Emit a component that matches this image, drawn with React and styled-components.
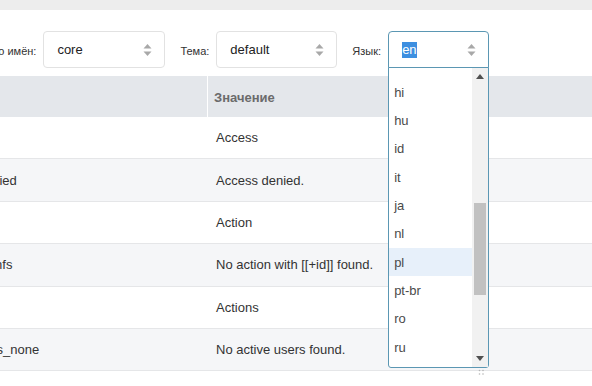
import React, { useLayoutEffect, useRef } from 'react';
import styled, { createGlobalStyle } from 'styled-components';

const GlobalStyle = createGlobalStyle`
    body {
        margin: 0;
        overflow: hidden;
        background: #fff;
        font-family: "Liberation Sans", Arial, sans-serif;
    }
`

const ITEM_H = 28.33;

const languages = [
    'ar', 'bg', 'cs', 'da', 'de', 'el', 'en', 'es', 'fa', 'fi', 'fr', 'he',
    'hi', 'hu', 'id', 'it', 'ja', 'nl', 'pl', 'pt-br', 'ro', 'ru',
    'sv', 'th', 'tr', 'uk', 'zh'
];

const rows = [
    ['access', 'Access'],
    ['access_denied', 'Access denied.'],
    ['action', 'Action'],
    ['action_err_nfs', 'No action with [[+id]] found.'],
    ['actions', 'Actions'],
    ['active_users_none', 'No active users found.'],
    ['add', 'Add'],
];

function Arrows() {
    return (
        <ArrowIcon width="9" height="14" viewBox="0 0 9 14">
            <path d="M4.5 1 L8.5 5.5 L0.5 5.5 Z" fill="#a8a8a8" />
            <path d="M4.5 13 L8.5 8.5 L0.5 8.5 Z" fill="#a8a8a8" />
        </ArrowIcon>
    )
}

function LanguageList() {
    const listRef = useRef(null);
    useLayoutEffect(() => {
        if (listRef.current) listRef.current.scrollTop = 12 * ITEM_H - 9.5;
    }, []);
    return (
        <Dropdown>
            <Items ref={listRef}>
                {languages.map((l) => (
                    <Item key={l} active={l === 'pl'}>{l}</Item>
                ))}
            </Items>
            <Scrollbar>
                <ScrollArrow>
                    <svg width="8" height="5" viewBox="0 0 8 5"><path d="M4 0 L8 5 L0 5 Z" fill="#505050" /></svg>
                </ScrollArrow>
                <Track>
                    <Thumb />
                </Track>
                <ScrollArrow>
                    <svg width="8" height="5" viewBox="0 0 8 5"><path d="M0 0 L8 0 L4 5 Z" fill="#505050" /></svg>
                </ScrollArrow>
            </Scrollbar>
            <Grip>
                <svg width="7" height="7" viewBox="0 0 7 7">
                    <circle cx="1.5" cy="1.5" r="0.8" fill="#b5b5b5" />
                    <circle cx="5" cy="1.5" r="0.8" fill="#b5b5b5" />
                    <circle cx="1.5" cy="5" r="0.8" fill="#b5b5b5" />
                    <circle cx="5" cy="5" r="0.8" fill="#b5b5b5" />
                </svg>
            </Grip>
        </Dropdown>
    )
}

export default function App() {
    return (
        <>
            <GlobalStyle />
            <TopBar />
            <Page>
                <Toolbar>
                    <Field>
                        <Label>Пространство имён:</Label>
                        <Select width={122}>
                            <span>core</span>
                            <Arrows />
                        </Select>
                    </Field>
                    <Field>
                        <Label>Тема:</Label>
                        <Select width={121}>
                            <span>default</span>
                            <Arrows />
                        </Select>
                    </Field>
                    <Field>
                        <Label>Язык:</Label>
                        <SelectWrap>
                            <Select width={101} open>
                                <Selected>en</Selected>
                                <Arrows />
                            </Select>
                            <LanguageList />
                        </SelectWrap>
                    </Field>
                </Toolbar>
                <Table>
                    <HeadCell divider />
                    <HeadCell>Значение</HeadCell>
                    {rows.map(([key, value], i) => (
                        <React.Fragment key={key}>
                            <Cell striped={i % 2 === 1}>{key}</Cell>
                            <Cell striped={i % 2 === 1}>{value}</Cell>
                        </React.Fragment>
                    ))}
                </Table>
            </Page>
        </>
    )
}

const TopBar = styled.div`
    height: 10px;
    background: #ededed;
`

const Page = styled.div`
    margin-left: -78px;
    width: 700px;
`

const Toolbar = styled.div`
    display: flex;
    align-items: center;
    gap: 15px;
    padding: 21px 0 8px 11px;
`

const Field = styled.div`
    display: flex;
    align-items: center;
    gap: 7px;
`

const Label = styled.span`
    font-size: 11px;
    color: #333;
    padding-top: 2px;
`

const SelectWrap = styled.div`
    position: relative;
`

const Select = styled.div`
    box-sizing: border-box;
    width: ${p => p.width}px;
    height: 37px;
    display: flex;
    align-items: center;
    justify-content: space-between;
    padding: 0 12px 0 13px;
    border: 1px solid ${p => p.open ? '#5b97b3' : '#e2e2e2'};
    border-radius: ${p => p.open ? '4px 4px 0 0' : '4px'};
    font-size: 13px;
    color: #222;
    background: #fff;
`

const Selected = styled.span`
    background: #3d8fe0;
    color: #fff;
    padding: 1px 0;
    line-height: 14px;
`

const ArrowIcon = styled.svg`
    display: block;
`

const Dropdown = styled.div`
    position: absolute;
    top: 36px;
    left: 0;
    box-sizing: border-box;
    width: 101px;
    height: 301px;
    display: flex;
    border: 1px solid #5b97b3;
    border-radius: 0 0 3px 3px;
    background: #fff;
    z-index: 5;
`

const Items = styled.div`
    flex: 1;
    overflow: hidden;
`

const Item = styled.div`
    box-sizing: border-box;
    height: ${ITEM_H}px;
    display: flex;
    align-items: center;
    padding-left: 5px;
    font-size: 13px;
    color: #4a4a4a;
    background: ${p => p.active ? '#e7f0fa' : 'transparent'};
`

const Scrollbar = styled.div`
    width: 16px;
    display: flex;
    flex-direction: column;
    background: #f1f1f1;
`

const ScrollArrow = styled.div`
    height: 17px;
    display: flex;
    align-items: center;
    justify-content: center;
`

const Track = styled.div`
    flex: 1;
    padding-top: 118px;
`

const Thumb = styled.div`
    height: 92px;
    margin: 0 2px 0 2px;
    background: #c1c1c1;
`

const Grip = styled.div`
    position: absolute;
    right: 3px;
    bottom: -9px;
    line-height: 0;
`

const Table = styled.div`
    display: grid;
    grid-template-columns: 286px 1fr;
`

const HeadCell = styled.div`
    height: 41px;
    display: flex;
    align-items: center;
    padding: 2px 6px 0;
    box-sizing: border-box;
    background: #e4e7eb;
    font-size: 13px;
    font-weight: bold;
    color: #6b6b6b;
    border-right: ${p => p.divider ? '1px solid #fff' : 'none'};
`

const Cell = styled.div`
    box-sizing: border-box;
    height: 42.4px;
    display: flex;
    align-items: center;
    padding: 0 8px;
    font-size: 13px;
    color: #333;
    white-space: nowrap;
    background: ${p => p.striped ? '#f5f6f8' : '#fff'};
    border-bottom: 1px solid #e5e6e8;
`
